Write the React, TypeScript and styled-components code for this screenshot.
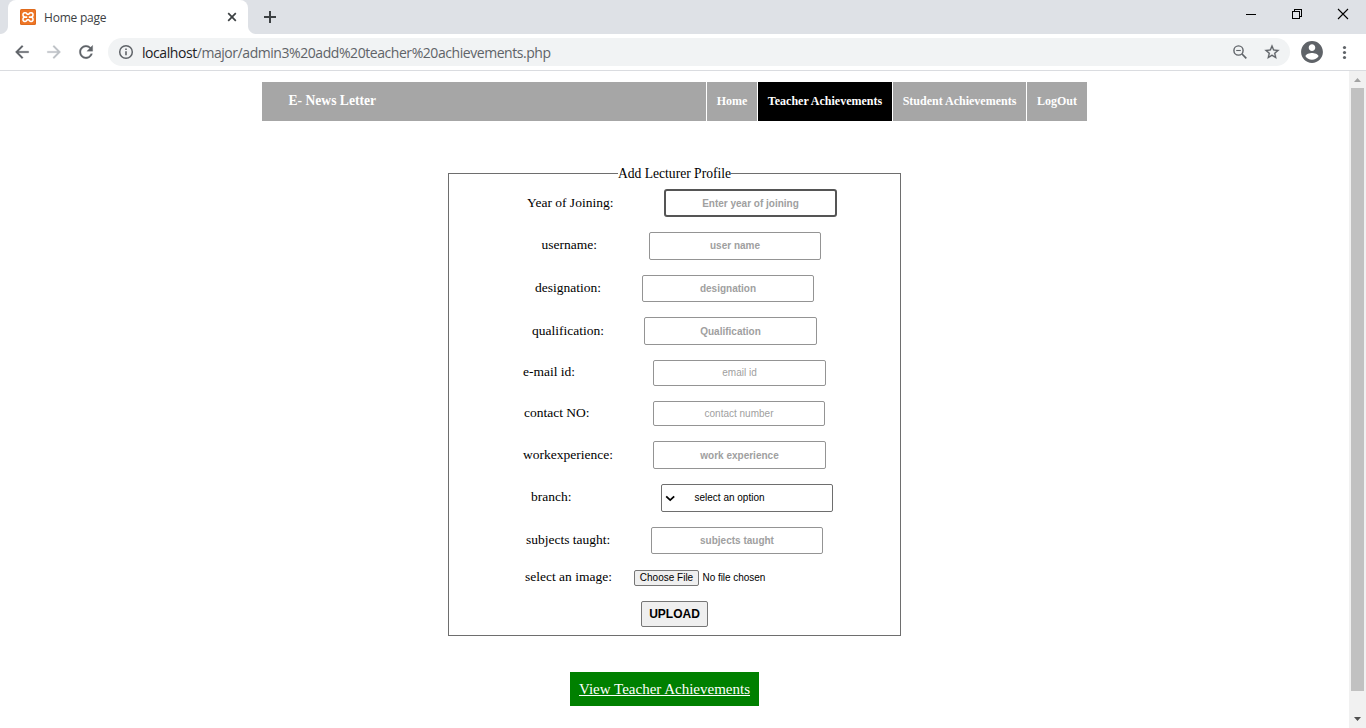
import React from 'react';
import styled, { createGlobalStyle } from 'styled-components';

const GlobalStyle = createGlobalStyle`
  * { box-sizing: border-box; }
  body { margin: 0; background: #fff; overflow: hidden; }
`;

const serif = '"Liberation Serif", "Times New Roman", serif';
const sans = '"Liberation Sans", Arial, sans-serif';
const ui = '"Open Sans", "Segoe UI", sans-serif';

const Window = styled.div`
  width: 1366px;
  height: 728px;
  display: flex;
  flex-direction: column;
  font-family: ${serif};
  color: #000;
  white-space: nowrap;
`;

const TabStrip = styled.header`
  height: 34px;
  flex: none;
  display: flex;
  background: #dee1e6;
  padding-left: 8px;
`;

const Tab = styled.div`
  position: relative;
  width: 240px;
  height: 34px;
  background: #fff;
  border-radius: 8px 8px 0 0;
  display: flex;
  align-items: center;
  padding: 0 8px 0 12px;
  font: 12px ${ui};
  color: #3c4043;
  &::before,
  &::after {
    content: '';
    position: absolute;
    bottom: 0;
    width: 8px;
    height: 8px;
  }
  &::before {
    left: -8px;
    background: radial-gradient(circle at 0 0, #dee1e6 7.5px, #fff 8.5px);
  }
  &::after {
    right: -8px;
    background: radial-gradient(circle at 100% 0, #dee1e6 7.5px, #fff 8.5px);
  }
`;

const TabTitle = styled.span`
  flex: 1;
  margin-left: 8px;
  letter-spacing: -0.22px;
`;

const NewTab = styled.div`
  padding: 9px 0 0 14px;
`;

const Controls = styled.div`
  margin-left: auto;
  display: flex;
  padding: 8px 17px 0 0;
  gap: 34px;
`;

const Toolbar = styled.div`
  height: 37px;
  flex: none;
  display: flex;
  align-items: center;
  padding: 0 13px 0 12px;
  border-bottom: 1px solid #dadce0;
`;

const NavIcons = styled.div`
  display: flex;
  gap: 12px;
`;

const Address = styled.div`
  flex: 1;
  height: 28px;
  margin: 0 10px 0 12px;
  border-radius: 14px;
  background: #f1f3f4;
  display: flex;
  align-items: center;
  padding: 0 8px 0 8px;
  font: 14px ${ui};
  color: #5f6368;
`;

const Url = styled.span`
  flex: 1;
  margin-left: 6px;
  letter-spacing: -0.44px;
`;

const Host = styled.span`
  color: #202124;
`;

const AddressIcons = styled.div`
  display: flex;
  gap: 12px;
`;

const ToolbarEnd = styled.div`
  display: flex;
  align-items: center;
  gap: 12px;
`;

const Viewport = styled.div`
  flex: 1;
  min-height: 0;
  display: flex;
`;

const Page = styled.main`
  flex: 1;
  padding: 11px 0 0 262px;
`;

const Scrollbar = styled.div`
  width: 17px;
  background: #f1f1f1;
  display: flex;
  flex-direction: column;
  align-items: center;
`;

const ScrollArrow = styled.div<{ $h: number; $top?: number }>`
  height: ${(p) => p.$h}px;
  padding-top: ${(p) => p.$top ?? 0}px;
  flex: none;
  display: flex;
  align-items: center;
`;

const Thumb = styled.div`
  width: 13px;
  height: 603px;
  flex: none;
  background: #c1c1c1;
`;

const NavBar = styled.nav`
  width: 825px;
  height: 39px;
  display: flex;
  background: #a6a6a6;
  color: #fff;
  font-weight: bold;
`;

const Brand = styled.div`
  flex: 1;
  padding-left: 26.5px;
  font-size: 13.6px;
  line-height: 38px;
`;

const NavItem = styled.a<{ $w: number; $active?: boolean }>`
  width: ${(p) => p.$w}px;
  border-left: 1px solid #fff;
  background: ${(p) => (p.$active ? '#000' : 'transparent')};
  font-size: 12px;
  line-height: 38px;
  text-align: center;
`;

const Form = styled.fieldset`
  width: 453px;
  height: 471px;
  margin: 44px 0 0 186px;
  padding: 0;
  border: 1px solid #6e6e6e;
`;

const Legend = styled.legend`
  margin: 0 auto;
  padding: 0;
  font-size: 13.6px;
  line-height: 17px;
`;

const Row = styled.div<{ $h: number; $gap: number }>`
  display: flex;
  align-items: center;
  height: ${(p) => p.$h}px;
  margin-top: ${(p) => p.$gap}px;
`;

const Label = styled.label<{ $x: number; $w: number; $low?: boolean }>`
  margin-left: ${(p) => p.$x}px;
  width: ${(p) => p.$w}px;
  flex: none;
  font-size: 13.5px;
  line-height: 16px;
  padding-bottom: ${(p) => (p.$low ? 0 : 2)}px;
`;

const Input = styled.input<{ $w: number; $bold?: boolean; $focus?: boolean; $low?: boolean }>`
  width: ${(p) => p.$w}px;
  height: 100%;
  padding: ${(p) => (p.$low ? '1px 0 0' : '0 0 1px')};
  border: ${(p) => (p.$focus ? '2px solid #555' : '1px solid #949494')};
  border-radius: ${(p) => (p.$focus ? 3 : 2)}px;
  outline: none;
  background: #fff;
  font: ${(p) => (p.$bold ? 'bold' : 'normal')} 10px ${sans};
  text-align: center;
  &::placeholder {
    color: #a0a0a0;
    opacity: 1;
  }
`;

const Select = styled.div`
  width: 172px;
  height: 100%;
  display: flex;
  align-items: center;
  border: 1px solid #6e6e6e;
  border-radius: 2px;
  padding: 0 0 1px 3px;
  gap: 18.5px;
  font: 10px ${sans};
`;

const FileButton = styled.button`
  width: 65px;
  height: 16px;
  padding: 0 0 1px;
  border: 1px solid #767676;
  border-radius: 2px;
  background: #efefef;
  font: 10px ${sans};
  color: #000;
  white-space: nowrap;
`;

const FileName = styled.span`
  margin-left: 3.5px;
  padding-bottom: 1px;
  font: 10px ${sans};
  letter-spacing: -0.05px;
`;

const Upload = styled.button`
  display: block;
  width: 67px;
  height: 26px;
  margin: 15px 0 0 192px;
  padding: 0;
  border: 1px solid #767676;
  border-radius: 2px;
  background: #efefef;
  font: bold 12px ${sans};
  color: #000;
`;

const ViewLink = styled.a`
  display: block;
  width: 189px;
  height: 34px;
  margin: 36px 0 0 308px;
  background: #008000;
  color: #fff;
  font-size: 15px;
  line-height: 34px;
  text-align: center;
  text-decoration: underline;
`;

type Field = {
  label: string;
  hint: string;
  x: number;
  inputX: number;
  w: number;
  h: number;
  gap: number;
  bold?: boolean;
  focus?: boolean;
  low?: boolean;
};

const fields: Field[] = [
  { label: 'Year of Joining:', hint: 'Enter year of joining', x: 78, inputX: 215, w: 173, h: 28, gap: 7, bold: true, focus: true, low: true },
  { label: 'username:', hint: 'user name', x: 92.5, inputX: 200, w: 172, h: 28, gap: 15, bold: true },
  { label: 'designation:', hint: 'designation', x: 86, inputX: 193, w: 172, h: 27, gap: 15, bold: true },
  { label: 'qualification:', hint: 'Qualification', x: 83, inputX: 195, w: 173, h: 28, gap: 15, bold: true, low: true },
  { label: 'e-mail id:', hint: 'email id', x: 74, inputX: 204, w: 173, h: 26, gap: 15 },
  { label: 'contact NO:', hint: 'contact number', x: 75, inputX: 204, w: 172, h: 25, gap: 15 },
  { label: 'workexperience:', hint: 'work experience', x: 74, inputX: 204, w: 173, h: 28, gap: 15, bold: true, low: true },
];

const FieldRow = ({ f }: { f: Field }) => (
  <Row $h={f.h} $gap={f.gap}>
    <Label $x={f.x} $w={f.inputX - f.x} $low={f.low}>{f.label}</Label>
    <Input $w={f.w} $bold={f.bold} $focus={f.focus} $low={f.low} placeholder={f.hint} />
  </Row>
);

const navPaths = [
  { d: 'M20 11H7.83l5.59-5.59L12 4l-8 8 8 8 1.41-1.41L7.83 13H20v-2z', c: '#5f6368' },
  { d: 'M12 4l-1.41 1.41L16.17 11H4v2h12.17l-5.58 5.59L12 20l8-8z', c: '#bdc1c6' },
  { d: 'M17.65 6.35C16.2 4.9 14.21 4 12 4c-4.42 0-7.99 3.58-7.99 8s3.57 8 7.99 8c3.73 0 6.84-2.55 7.73-6h-2.08c-.82 2.33-3.04 4-5.65 4-3.31 0-6-2.69-6-6s2.69-6 6-6c1.66 0 3.14.69 4.22 1.78L13 11h7V4l-2.35 2.35z', c: '#5f6368' },
];

export default function App() {
  return (
    <Window>
      <GlobalStyle />
      <TabStrip>
        <Tab>
          <svg width="16" height="16" viewBox="0 0 16 16">
            <rect width="16" height="16" rx="1.5" fill="#df6b1d" />
            <rect x="1" y="1" width="14" height="14" rx="1" fill="#ee7526" />
            <g fill="none" stroke="#fff">
              <path d="M7.200 7.900H5a2.100 2.100 0 1 1 2.100-2.500M8.800 7.900H11a2.100 2.100 0 1 0-2.100-2.500M7.200 8.200H5a2.100 2.100 0 1 0 2.100 2.500M8.800 8.200H11a2.100 2.100 0 1 1-2.100 2.500" strokeWidth="1.500" />
              <path d="M6.800 5.300h2.400M6.800 10.700h2.400" strokeWidth="1.500" />
            </g>
          </svg>
          <TabTitle>Home page</TabTitle>
          <svg width="16" height="16" viewBox="0 0 16 16">
            <path d="M4.200 4.200l7.600 7.600M11.800 4.200l-7.600 7.600" stroke="#3c4043" strokeWidth="1.700" />
          </svg>
        </Tab>
        <NewTab>
          <svg width="16" height="16" viewBox="0 0 16 16">
            <path d="M8 2v12M2 8h12" stroke="#3c4043" strokeWidth="2" />
          </svg>
        </NewTab>
        <Controls>
          <svg width="12" height="12" viewBox="0 0 12 12" shapeRendering="crispEdges">
            <path d="M1 6.500h10" stroke="#000" />
          </svg>
          <svg width="12" height="12" viewBox="0 0 12 12" fill="none" stroke="#000" shapeRendering="crispEdges">
            <path d="M1.500 3.500h7v7h-7zM3.500 3.500v-2h7v7h-2" />
          </svg>
          <svg width="12" height="12" viewBox="0 0 12 12">
            <path d="M1 1l10 10M11 1L1 11" stroke="#000" strokeWidth="1.100" />
          </svg>
        </Controls>
      </TabStrip>

      <Toolbar>
        <NavIcons>
          {navPaths.map((p) => (
            <svg key={p.c + p.d.length} width="20" height="20" viewBox="0 0 24 24">
              <path d={p.d} fill={p.c} stroke={p.c} strokeWidth="0.300" />
            </svg>
          ))}
        </NavIcons>
        <Address>
          <svg width="20" height="16" viewBox="0 0 20 16" fill="none" stroke="#5f6368">
            <circle cx="10" cy="8" r="6.300" strokeWidth="1.500" />
            <path d="M10 7.300v4M10 4.500v1.500" strokeWidth="1.600" />
          </svg>
          <Url>
            <Host>localhost</Host>/major/admin3%20add%20teacher%20achievements.php
          </Url>
          <AddressIcons>
            <svg width="20" height="20" viewBox="0 0 20 20" fill="none" stroke="#5f6368">
              <circle cx="8.500" cy="8.500" r="4.600" strokeWidth="1.400" />
              <path d="M12 12l4.300 4.300" strokeWidth="1.700" />
              <path d="M6.200 8.500h4.600" strokeWidth="1.100" />
            </svg>
            <svg width="20" height="20" viewBox="-1.500 -1.500 27 27" fill="#5f6368">
              <path d="M22 9.240l-7.190-.62L12 2 9.190 8.630 2 9.240l5.460 4.730L5.820 21 12 17.270 18.180 21l-1.630-7.030L22 9.240zM12 15.400l-3.760 2.270 1-4.280-3.320-2.880 4.380-.38L12 6.100l1.710 4.040 4.380.38-3.320 2.880 1 4.280L12 15.400z" stroke="#5f6368" strokeWidth=".3" />
            </svg>
          </AddressIcons>
        </Address>
        <ToolbarEnd>
          <svg width="24" height="24" viewBox="1 1 22 22" fill="#5f6368">
            <path d="M12 2C6.480 2 2 6.480 2 12s4.480 10 10 10 10-4.480 10-10S17.520 2 12 2zm0 3c1.660 0 3 1.340 3 3s-1.340 3-3 3-3-1.340-3-3 1.340-3 3-3zm0 14.200c-2.500 0-4.710-1.280-6-3.220.03-1.990 4-3.080 6-3.080 1.990 0 5.970 1.090 6 3.080-1.290 1.940-3.500 3.220-6 3.220z" />
          </svg>
          <svg width="17" height="20" viewBox="0 0 17 20" fill="#5f6368">
            <circle cx="8.500" cy="5.500" r="1.600" />
            <circle cx="8.500" cy="10.500" r="1.600" />
            <circle cx="8.500" cy="15.500" r="1.600" />
          </svg>
        </ToolbarEnd>
      </Toolbar>

      <Viewport>
        <Page>
          <NavBar>
            <Brand>E- News Letter</Brand>
            <NavItem $w={51}>Home</NavItem>
            <NavItem $w={135} $active>Teacher Achievements</NavItem>
            <NavItem $w={134}>Student Achievements</NavItem>
            <NavItem $w={61}>LogOut</NavItem>
          </NavBar>
          <Form>
            <Legend>Add Lecturer Profile</Legend>
            {fields.map((f) => (
              <FieldRow key={f.label} f={f} />
            ))}
            <Row $h={28} $gap={15}>
              <Label $x={82} $w={130}>branch:</Label>
              <Select>
                <svg width="11" height="10" viewBox="0 0 11 10">
                  <path d="M1.200 3.300l4 3.800 4-3.800" fill="none" stroke="#000" strokeWidth="1.800" />
                </svg>
                select an option
              </Select>
            </Row>
            <FieldRow f={{ label: 'subjects taught:', hint: 'subjects taught', x: 77, inputX: 202, w: 172, h: 27, gap: 15, bold: true }} />
            <Row $h={16} $gap={16}>
              <Label $x={76} $w={109}>select an image:</Label>
              <FileButton>Choose File</FileButton>
              <FileName>No file chosen</FileName>
            </Row>
            <Upload>UPLOAD</Upload>
          </Form>
          <ViewLink>View Teacher Achievements</ViewLink>
        </Page>
        <Scrollbar>
          <ScrollArrow $h={17}>
            <svg width="7" height="4" viewBox="0 0 7 4"><path d="M0 4L3.500 0 7 4z" fill="#a3a3a3" /></svg>
          </ScrollArrow>
          <Thumb />
          <ScrollArrow $h={37} $top={19}>
            <svg width="7" height="4" viewBox="0 0 7 4"><path d="M0 0h7L3.500 4z" fill="#505050" /></svg>
          </ScrollArrow>
        </Scrollbar>
      </Viewport>
    </Window>
  );
}
